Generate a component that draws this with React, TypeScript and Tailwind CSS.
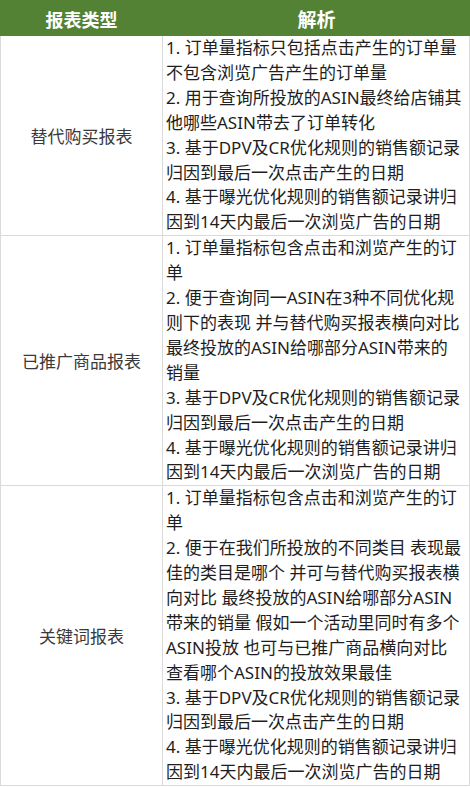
import React from 'react';

// each item is a list of pre-wrapped lines, matching the original cell breaks
type Row = { type: string; items: string[][] };

const tail = [
  ['3. 基于DPV及CR优化规则的销售额记录', '归因到最后一次点击产生的日期'],
  ['4. 基于曝光优化规则的销售额记录讲归', '因到14天内最后一次浏览广告的日期'],
];

const rows: Row[] = [
  {
    type: '替代购买报表',
    items: [
      ['1. 订单量指标只包括点击产生的订单量', '不包含浏览广告产生的订单量'],
      ['2. 用于查询所投放的ASIN最终给店铺其', '他哪些ASIN带去了订单转化'],
      ...tail,
    ],
  },
  {
    type: '已推广商品报表',
    items: [
      ['1. 订单量指标包含点击和浏览产生的订', '单'],
      [
        '2. 便于查询同一ASIN在3种不同优化规',
        '则下的表现 并与替代购买报表横向对比',
        '最终投放的ASIN给哪部分ASIN带来的',
        '销量',
      ],
      ...tail,
    ],
  },
  {
    type: '关键词报表',
    items: [
      ['1. 订单量指标包含点击和浏览产生的订', '单'],
      [
        '2. 便于在我们所投放的不同类目 表现最',
        '佳的类目是哪个 并可与替代购买报表横',
        '向对比 最终投放的ASIN给哪部分ASIN',
        '带来的销量 假如一个活动里同时有多个',
        'ASIN投放 也可与已推广商品横向对比',
        '查看哪个ASIN的投放效果最佳',
      ],
      ...tail,
    ],
  },
];

export default function App() {
  return (
    <div
      className="w-[470px] h-[787px] bg-white overflow-hidden"
      style={{ fontFamily: '"Noto Sans", "Noto Sans CJK SC", sans-serif' }}
    >
      {/* Header */}
      <div className="flex h-[36px] bg-[#548235] text-white font-bold">
        <div className="w-[163px] flex items-center justify-center text-[18px] pt-[2px]" style={{ fontFamily: '"Noto Sans CJK SC", sans-serif' }}>
          报表类型
        </div>
        <div className="flex-1 flex items-center justify-center text-[19px] pt-[2px]" style={{ fontFamily: '"Noto Sans CJK SC", sans-serif' }}>
          解析
        </div>
      </div>

      {/* Body */}
      <div className="border-l border-r border-b border-[#dadada]">
        {rows.map((row, i) => (
          <div key={i} className={`flex ${i > 0 ? 'border-t border-[#dadada]' : ''}`}>
            <div
              className="w-[162px] shrink-0 border-r border-[#dadada] flex items-center justify-center text-[17px] text-[#3a3a3a]"
              style={{ fontFamily: '"Noto Sans CJK SC", sans-serif' }}
            >
              {row.type}
            </div>
            <div className="flex-1 pl-[3px] text-[17px] leading-[24.9px] text-[#1e1e1e] whitespace-nowrap">
              {row.items.map((item, j) => (
                <div key={j}>
                  {item.map((line, k) => (
                    <div key={k}>{line}</div>
                  ))}
                </div>
              ))}
            </div>
          </div>
        ))}
      </div>
    </div>
  );
}
